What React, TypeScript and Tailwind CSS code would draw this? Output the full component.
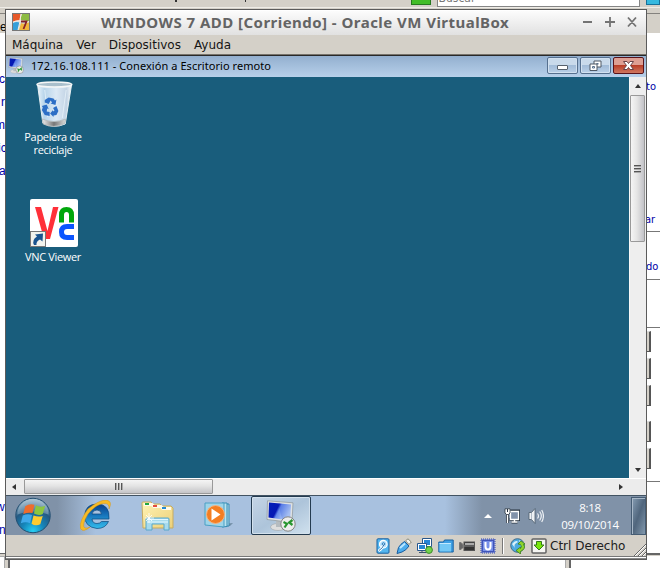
import React from "react";

function Flag({ className }: { className?: string }) {
  return (
    <g className={className}>
      <path d="M10 10.500Q14.500 7.500 19.500 9L17.500 17.500Q13 16.500 8 18.500Z" fill="#ef6c2c" />
      <path d="M21 9.500Q25.500 12 30.500 10L28 18.500Q24 20.500 19 18Z" fill="#8cc63e" />
      <path d="M7.500 20Q12.500 17.500 17 19.500L15 28Q10.500 26 5.500 28Z" fill="#3fa9ea" />
      <path d="M18.500 20Q23.500 22 28 20.500L25.500 29Q20.500 31.500 16.500 28.500Z" fill="#fdcb2f" />
    </g>
  );
}

function RdpIcon({ className }: { className: string }) {
  return (
    <svg viewBox="0 0 30 32" className={className}>
      <defs>
        <linearGradient id="scr" x1="0" x2="1" y2=".4">
          <stop offset="0" stopColor="#0420b8" />
          <stop offset=".45" stopColor="#0518b4" />
          <stop offset=".55" stopColor="#668bec" />
          <stop offset="1" stopColor="#c6ddfa" />
        </linearGradient>
      </defs>
      <ellipse cx="12" cy="27" rx="7.500" ry="3.500" fill="#dedede" stroke="#a0a5a8" strokeWidth=".6" />
      <path d="M10 20l6 1v6h-6z" fill="#b6bcc0" />
      <path d="M1.500.8L27 2.800 26 22.500 1 19.500Z" fill="#dfe2e3" stroke="#8c9599" strokeWidth=".7" />
      <path d="M3 2.500L25 4.500 24 20.500 2.500 17.500Z" fill="url(#scr)" />
      <path d="M12 3.400L16 18.800 24 20.500 25 4.500Z" fill="#2446d2" opacity=".2" />
      <circle cx="22" cy="24" r="7.200" fill="#ececec" stroke="#858585" />
      <path d="M17.500 22l3.500 1.800-2.500 3.700M26.500 20l-3.300 2.500L26.500 25" fill="none" stroke="#28962f" strokeWidth="2.200" />
    </svg>
  );
}

function VistaSevenIcon() {
  return (
    <svg viewBox="0 0 18 18" className="ml-[6px] h-[18px] w-[18px]">
      <rect x=".5" y=".5" width="17" height="17" fill="#d3e2e8" stroke="#777" />
      <path d="M1 1h8Q7 6 8 8 4 7 1 9z" fill="#e7592a" />
      <path d="M10 1h7v7Q13 10 9 8 8 5 10 1z" fill="#8dbb43" />
      <path d="M1 10q4-2 7 0l-2 7H1z" fill="#369fd9" />
      <path d="M9 10q4 2 8-1v8H7z" fill="#f1b53c" />
      <path d="M1 9Q7 6 17 9M9 1Q8 10 6 17" stroke="#f8ece0" fill="none" />
      <path d="M9 8.500h5.500L11.500 16" stroke="#86202a" strokeWidth="1.800" fill="none" />
    </svg>
  );
}

function RecycleBin() {
  return (
    <svg viewBox="0 0 38 46" preserveAspectRatio="none" className="h-[46px] w-[37px]">
      <defs>
        <linearGradient id="glass">
          <stop offset="0" stopColor="#e7f3fb" />
          <stop offset=".2" stopColor="#b7d4ea" />
          <stop offset=".55" stopColor="#dce9f5" />
          <stop offset=".85" stopColor="#c3d4e5" />
          <stop offset="1" stopColor="#f4f8fa" />
        </linearGradient>
        <linearGradient id="base">
          <stop offset="0" stopColor="#eee" /><stop offset=".5" stopColor="#777" /><stop offset="1" stopColor="#ddd" />
        </linearGradient>
      </defs>
      <path d="M1.500 3L7 42Q18 48 30 43L36.500 4Z" fill="url(#glass)" stroke="#e9f0f3" />
      <path d="M6.500 38L7.500 43Q18 48 29.500 42.500L30.500 38Q18 43 6.500 38Z" fill="url(#base)" stroke="#b6bdbf" />
      <ellipse cx="18.900" cy="3.500" rx="17.900" ry="2.600" fill="#a9bfcc" stroke="#f4f6f7" strokeWidth="1.500" />
      <path d="M31 9l-4 28M9 9l3 27" stroke="#edf7fd" opacity=".7" />
      <g fill="#2d6fc6">
        <path d="M9 19l4-2.500 5 1 1.500 2 1.500-1-1 5.500-5-1.500 1.500-1-1.500-2-2 3.500-4-1.500z" />
        <path d="M6 25l5-1.500 2 4.500-1.500-.5-.5 3 3 .5v4l-5-1-3-5 1-2.500z" />
        <path d="M21 25l2 5-2 4-3 .5v1.500l-3.500-3.500 3-3.500v1.500l1.500-1-1.500-2.500z" />
      </g>
    </svg>
  );
}

function VncIcon() {
  return (
    <svg viewBox="0 0 48 48" className="h-[48px] w-[48px]">
      <rect width="48" height="48" rx="2" fill="#fff" />
      <path d="M5 8h6l6.500 24L23 8h5.500L20 40h-6z" fill="#ff3039" />
      <path d="M31.500 23.500V16Q31.500 10.500 36.500 10.500T41.500 16v7.500" fill="none" stroke="#00a70c" strokeWidth="5" />
      <path d="M44 27.500H37Q31.500 27.500 31.500 33T37 38.500H44" fill="none" stroke="#0b55ff" strokeWidth="5" />
      <rect x=".5" y="32.500" width="15" height="15" fill="#f2f3ed" stroke="#777" />
      <path d="M4 46Q1.500 41 7 37.500L5 35.500 13 34.500 12.500 42.500 10 40.500Q6 42 6.500 46Z" fill="#1a548f" />
    </svg>
  );
}

function StartOrb() {
  return (
    <svg viewBox="0 0 38 38" className="ml-[8px] h-[37px] w-[38px] shrink-0">
      <defs>
        <radialGradient id="orb" cy=".95" r=".95">
          <stop offset="0" stopColor="#27cff3" /><stop offset=".33" stopColor="#1586ba" /><stop offset=".65" stopColor="#245a83" /><stop offset="1" stopColor="#a7c0cf" />
        </radialGradient>
      </defs>
      <circle cx="19" cy="19" r="17.700" fill="url(#orb)" stroke="#214d70" />
      <path d="M3 18A16 16 0 0 1 35 18Q18 12 3 18Z" fill="#d6e4ee" opacity=".3" />
      <g transform="translate(1 -1)"><Flag /></g>
    </svg>
  );
}

function IeIcon() {
  return (
    <svg viewBox="0 0 33 32" className="ml-[27px] h-[32px] w-[33px] shrink-0">
      <defs><linearGradient id="ie" x2="0" y2="1"><stop stopColor="#083d88" /><stop offset=".45" stopColor="#1674bb" /><stop offset="1" stopColor="#35bded" /></linearGradient></defs>
      <path d="M30 19H13Q13.500 23.500 18 23.500Q21 23.500 22.500 21.500H29.500Q26.500 28.500 18 28.500Q5.500 27 5.500 15.500Q6.500 4 18 4Q31 4 30 19ZM13 14H22.500Q22 10 18 10Q13.500 10 13 14Z" fill="url(#ie)" stroke="#0b477b" strokeWidth=".7" />
      <path d="M9 9Q20 0 27 0Q34 1 30 9Q30.500 3.500 26 3.500Q18 3 9 14Q2 26 6 28Q8 28.500 11 27Q4 33 1.500 28.500Q0 21 9 9Z" fill="#f7bb25" stroke="#d79516" strokeWidth=".5" />
    </svg>
  );
}

function ExplorerIcon() {
  return (
    <svg viewBox="0 0 33 30" className="ml-[29px] h-[30px] w-[33px] shrink-0">
      <defs><linearGradient id="fold" x2="1" y2="1"><stop stopColor="#fff3b5" /><stop offset="1" stopColor="#ecd078" /></linearGradient></defs>
      <path d="M1 2Q1 1 2 1H10L12 3H19L21 5H30L32 7V27H2Z" fill="url(#fold)" stroke="#c6ab61" />
      <path d="M3 3.500h8l2 2h7l2 2h8" stroke="#fffbea" strokeWidth="3" fill="none" />
      <path d="M4 3h4" stroke="#22a541" strokeWidth="2" />
      <path d="M12 5h4" stroke="#e44d3e" strokeWidth="2" /><path d="M21 7h4" stroke="#258bd3" strokeWidth="2" />
      <path d="M5 18q0-1 1-1h21q1 0 1 1v11h-5v-6H11v6H5z" fill="#a7dbed" stroke="#58a8cb" />
      <path d="M6 18.500h21M6 21h21" stroke="#e2f8ff" />
      <path d="M8 12v10M4 17h9M5 14l6 6M11 14l-6 6" stroke="#fff" strokeWidth=".8" />
    </svg>
  );
}

function PlayerIcon() {
  return (
    <svg viewBox="0 0 30 27" className="ml-[30px] h-[27px] w-[30px] shrink-0">
      <path d="M19 22l10-1-3 3-7 1z" fill="#718da5" /><path d="M18 2h7v22h-7z" fill="#afd9e9" stroke="#348bb3" />
      <path d="M18 1h5v23.500l-5 .5z" fill="#b9e3ef" stroke="#348bb3" />
      <path d="M1 1h19v24L1 23z" fill="#9ed4e8" stroke="#4a9fc4" />
      <circle cx="11.500" cy="12.500" r="9" fill="#f47e22" stroke="#f9b17b" />
      <path d="M7.500 6.500v12l9-6z" fill="#fff" />
    </svg>
  );
}

function CaptionButton({ kind, close = false }: { kind: string; close?: boolean }) {
  return (
    <div className={"flex h-[17px] w-[31px] items-center justify-center rounded-[2px] border " + (close ? "border-[#59131a] bg-linear-to-b from-[#de9f93] from-45% via-[#b93d26] via-50% to-[#cf765f]" : "border-[#56708f] bg-linear-to-b from-[#c9daeb] from-45% via-[#a2bcd8] via-50% to-[#bad0e8] shadow-[inset_0_0_0_1px_#d2e1f0]")}>
      <svg viewBox="0 0 15 13" className="h-[13px] w-[15px]">
        {kind === "min" && <rect x="2.500" y="6.500" width="10" height="4" rx=".5" fill="#fff" stroke="#56606c" />}
        {kind === "restore" && <><path d="M6 2h7v6H6z" fill="#fff" stroke="#4e5865" /><path d="M8.500 4h2v1.500h-2z" fill="#59708d" /><path d="M2 5h7v6.500H2z" fill="#fff" stroke="#4e5865" /><path d="M4.500 7.500h2v1.500h-2z" fill="#fff" stroke="#59708d" /></>}
        {kind === "close" && <path d="M2.500 2.500h3.500L7.500 4.500 9 2.500h3.500L9.500 6.500l3 4H9L7.500 8.500 6 10.500H2.500l3-4z" fill="#fff" stroke="#684247" />}
      </svg>
    </div>
  );
}

function NetworkIcon() {
  return (
    <svg viewBox="0 0 16 16" className="h-[16px] w-[16px]">
      <path d="M6.500 3h8.500v8.500H5.500M10 11v3M7.500 14h6M3.500 5.500V15" fill="none" stroke="#26323f" strokeWidth="3" />
      <path d="M6.500 3.500h8v8h-8z" fill="#8192aa" stroke="#fff" strokeWidth="1.300" />
      <path d="M10.500 11.500V14M7.500 14h6M3.500 6v9" fill="none" stroke="#fff" strokeWidth="1.400" />
      <path d="M1 .8h5V5L4.500 6.500h-2L1 5z" fill="#fff" stroke="#26323f" strokeWidth=".8" /><path d="M3.500 1v3" stroke="#26323f" />
    </svg>
  );
}

function SpeakerIcon() {
  return <svg viewBox="0 0 16 16" className="h-[16px] w-[16px]"><path d="M1 4.500h2.500l3.500-4v15l-3.500-4H1z" fill="#eef1f4" stroke="#4a5a6b" strokeWidth=".8" /><path d="M3.500 5v6" stroke="#8c9aaa" strokeWidth=".6" /><path d="M9.500 5.500q2 2.500 0 5M11.700 3.500q3.200 4.500 0 9M13.700 2q3.500 6 0 12" fill="none" stroke="#edf1f5" strokeWidth="1.200" /></svg>;
}

function StatusIcons() {
  return (
    <div className="flex items-center gap-[5px]">
      <svg viewBox="0 0 16 16" className="h-[16px] w-[16px]"><rect x="2" y=".8" width="12" height="14.400" rx="1" fill="#54b6ef" stroke="#1760a2" /><circle cx="8.300" cy="6.200" r="3.800" fill="#b5e0fb" stroke="#fff" strokeWidth="1.200" /><path d="M8.500 6.500Q8 10 3.500 13" stroke="#fff" strokeWidth="2.500" fill="none" /><path d="M9 6.500Q8 10 4 12.500" stroke="#1668ac" strokeWidth=".9" fill="none" /><circle cx="8.500" cy="6" r="1.300" fill="none" stroke="#1668ac" strokeWidth=".8" /></svg>
      <svg viewBox="0 0 16 16" className="h-[16px] w-[16px]"><path d="M2.500 9.500q2-3.500 6-6l4.500 4.500q-3 4.500-7 6L1 15.500z" fill="#4baced" stroke="#175da0" /><path d="M9.500 2.800L12 .8 15.300 4 13 6.500z" fill="#f5f5ed" stroke="#858779" /><path d="M4 10l5-4.500" stroke="#b9e6ff" strokeWidth="2" /></svg>
      <svg viewBox="0 0 16 16" className="h-[16px] w-[16px]"><path d="M5.500.5h9v8h-9z" fill="#fff" stroke="#27568c" /><path d="M7 2h6v5H7z" fill="#2585d6" /><path d="M.5 5.500h9v7h-9z" fill="#fff" stroke="#27568c" /><path d="M2 7h6v4H2z" fill="#2786d4" /><path d="M2 14.500h7M5 12.500v2" fill="none" stroke="#39516b" /><circle cx="12" cy="12" r="3.400" fill="#73d44d" stroke="#3a8b28" /></svg>
      <svg viewBox="0 0 16 16" className="h-[16px] w-[16px]"><path d="M.8 4h4.700l1-2h8.700v12H.8z" fill="#3d9fe4" stroke="#1762a3" /><path d="M1.500 5H13v8.500H1.500z" fill="#73c8f6" /><path d="M1.500 5.500H13" stroke="#c2e9ff" /></svg>
      <svg viewBox="0 0 16 16" className="h-[16px] w-[16px]"><path d="M.5 4.500h1.500l2 2v3l-2 2H.5z" fill="#666" stroke="#777" /><rect x="5" y="4" width="10.500" height="8.500" fill="#333" stroke="#555" /><path d="M6 5h9v2H6z" fill="#aaa" /><path d="M5 8h10" stroke="#888" /></svg>
      <svg viewBox="0 0 16 16" className="h-[16px] w-[16px]"><rect x="1" y="1" width="14" height="14" fill="#8290d3" stroke="#394cad" strokeDasharray="1 1" /><rect x="2.500" y="2.500" width="11" height="11" fill="#7890e8" stroke="#4054b8" /><path d="M5.500 4v4.500q0 3 2.500 3t2.500-3V4" fill="none" stroke="#fff" strokeWidth="2" /></svg>
    </div>
  );
}

function Grip({ vertical = false }: { vertical?: boolean }) {
  return <div className={"flex gap-px " + (vertical ? "flex-col" : "")}>{[0, 1, 2].map((n) => <i key={n} className={vertical ? "h-[2px] w-[7px] border-b border-[#aaa] bg-[#555]" : "h-[7px] w-[2px] border-r border-[#aaa] bg-[#555]"} />)}</div>;
}

function Browser() {
  return (
    <div className="absolute inset-0 overflow-hidden bg-white font-['Liberation_Sans'] text-[12px] text-[#0000a8]">
      <div className="h-[33px] bg-[#d4d0c8]">
        <div className="flex h-[8px] items-start border-b border-[#eeece7] pl-[411px]">
          <div className="h-[5px] w-[20px] border border-t-0 border-[#26791f] bg-[#42bd28]" />
          <div className="ml-[6px] h-[7px] w-[209px] border border-t-0 border-[#858585] bg-white pl-[1px]"><span className="relative -top-[9px] block font-['DejaVu_Sans_Condensed'] text-[12px] leading-[14px] text-[#777]">Buscar</span></div>
          <div className="ml-[6px] h-[5px] w-[14px] border border-t-0 border-[#17719a] bg-[#36b9df]" />
        </div>
        <div className="mt-[5px] border-t border-[#84827e]" />
      </div>
      <i className="absolute left-[175px] top-0 h-[2px] w-[2px] bg-[#333]" />
      <i className="absolute left-[245px] top-0 h-[2px] w-px bg-[#333]" />
      <span className="absolute left-0 top-[18px] text-black">e</span>
      <span className="absolute -left-[1px] top-[70px]">c</span><span className="absolute left-[1px] top-[93px]">r</span><span className="absolute -left-[5px] top-[116px]">m</span><span className="absolute -left-[2px] top-[139px]">ic</span><span className="absolute -left-[1px] top-[162px]">a</span>
      <span className="absolute -left-[4px] top-[498px]">w</span><span className="absolute -left-[1px] top-[521px]">n</span>
      <div className="absolute left-[646px] top-[79px] h-[480px] w-[14px] font-['DejaVu_Sans_Condensed'] text-[11px]">
        <div className="h-[133px]">to</div><div className="-ml-[1px] h-[19px]">ar</div>
        <div className="h-[48px] border-t border-[#777] pt-[27px]">do</div>
        <div className="h-[48px] border-t border-[#777]" />
        <div className="flex h-[154px] flex-col gap-[6px] border-t border-[#777] pt-[3px]">
          {[0, 1, 2, 3, 4].map((n) => <div key={n} className={"h-[21px] w-[5px] shrink-0 border-b border-r-2 border-t border-[#555] border-t-[#ddd] bg-[#d4d0c8] " + (n === 3 ? "mt-[9px]" : "")} />)}
        </div>
        <div className="border-t border-[#777]" />
      </div>
      <div className="absolute bottom-0 left-0 h-[15px] w-[10px] border-r-2 border-t border-[#666] bg-[#d4d0c8]"><div className="mr-[3px] mt-[2px] h-full border-r border-t border-[#aaa] bg-white" /></div>
      <div className="absolute bottom-0 right-0 h-[15px] w-[91px] border-l-2 border-t-2 border-[#666]"><div className="h-full border-t border-[#d4d0c8]" /></div>
      <div className="absolute bottom-0 right-[91px] h-[10px] w-[4px] border-l border-[#aaa] bg-[#d4d0c8]" />
    </div>
  );
}

export default function App() {
  return (
    <main className="relative h-[568px] w-[660px] overflow-hidden">
      <Browser />
      <section className="absolute left-[5px] top-[9px] flex h-[551px] w-[642px] flex-col border border-[#5b5b5b] bg-[#d4d0c8]">
        <header className="flex h-[25px] shrink-0 items-center border-t border-white bg-linear-to-b from-[#fcfcfc] to-[#e1e1e1] pb-[2px]">
          <VistaSevenIcon />
          <h1 className="ml-[71px] w-[440px] whitespace-nowrap font-['Noto_Sans'] text-[15px] font-bold leading-[22px] tracking-[.46px] text-[#646464]">WINDOWS 7 ADD [Corriendo] - Oracle VM VirtualBox</h1>
          <svg viewBox="0 0 56 12" className="ml-[41px] h-[12px] w-[56px]"><path d="M1 6h9M23 6h10M28 1v10M46 1.500l8 9M54 1.500l-8 9" fill="none" stroke="#737373" strokeWidth="1.800" /></svg>
        </header>
        <nav className="flex h-[19px] shrink-0 items-center gap-[13px] pl-[6px] pt-[2px] font-['DejaVu_Sans'] text-[12px] leading-[17px] text-[#151515]"><span>Máquina</span><span>Ver</span><span>Dispositivos</span><span>Ayuda</span></nav>
        <div className="h-[2px] shrink-0 border-t border-[#77736c] bg-[#292929]" />
        <div className="flex h-[21px] shrink-0 items-center bg-linear-to-b from-[#93afcf] to-[#b7d0ea]">
          <RdpIcon className="mb-[2px] ml-[2px] h-[17px] w-[16px]" />
          <h2 className="mb-[2px] ml-[7px] w-[516px] whitespace-nowrap font-['Noto_Sans'] text-[11px] leading-[18px] tracking-[.06px] text-black">172.16.108.111 - Conexión a Escritorio remoto</h2>
          <div className="mb-[2px] flex gap-[2px]"><CaptionButton kind="min" /><CaptionButton kind="restore" /><CaptionButton kind="close" close /></div>
        </div>
        <div className="flex h-[401px] shrink-0">
          <div className="w-[623px] bg-[#195d7c] font-['Open_Sans'] text-[11px] leading-[13px] tracking-[-.33px] text-white">
            <div className="flex h-[122px] w-[94px] flex-col items-center pt-[4px] text-center"><div className="pl-[2px]"><RecycleBin /></div><span className="mt-[3px] w-[70px]">Papelera de reciclaje</span></div>
            <div className="flex w-[94px] flex-col items-center"><div className="pl-[2px]"><VncIcon /></div><span className="mt-[3px]">VNC Viewer</span></div>
          </div>
          <div className="flex w-[17px] flex-col items-center border-l border-[#f8f8f8] bg-[#eeeeee] pr-px">
            <div className="flex h-[18px] items-center"><i className="border-x-[3px] border-b-[4px] border-x-transparent border-b-[#333]" /></div>
            <div className="flex h-[147px] w-[15px] items-center justify-center rounded-[1px] border border-[#999] bg-linear-to-r from-[#f5f5f5] via-[#e5e5e5] via-45% to-[#c3c3c8] pr-px"><Grip vertical /></div>
            <div className="mb-[6px] mt-auto border-x-[3px] border-t-[4px] border-x-transparent border-t-[#333]" />
          </div>
        </div>
        <div className="flex h-[17px] shrink-0 items-center border-t border-white bg-[#ececec] pb-px">
          <div className="flex w-[18px] justify-center pr-[2px]"><i className="border-y-[3px] border-r-[4px] border-y-transparent border-r-[#333]" /></div>
          <div className="flex h-[15px] w-[189px] items-center justify-center rounded-[1px] border border-[#999] bg-linear-to-b from-[#f5f5f5] via-[#e4e4e4] via-45% to-[#c4c4c7]"><Grip /></div>
          <i className="ml-[406px] border-y-[3px] border-l-[4px] border-y-transparent border-l-[#333]" />
        </div>
        <div className="flex h-[40px] shrink-0 items-center border-t border-[#425362] bg-linear-to-r from-[#8092a8] from-8% via-[#a8c1df] via-14% to-[#a8c1df]">
          <StartOrb /><IeIcon /><ExplorerIcon /><PlayerIcon />
          <div className="ml-[17px] flex h-[39px] w-[60px] shrink-0 items-center justify-center rounded-[2px] border border-[#243b50] bg-linear-to-br from-[#c4d4e5] via-[#adc4da] to-[#d0e1ee] shadow-[inset_0_0_0_1px_#d3e1ed]"><RdpIcon className="h-[32px] w-[30px]" /></div>
          <div className="flex h-full grow items-center bg-linear-to-r from-[#a8c1df] from-[40%] to-[#8092a8] to-[51%] pl-[173px]">
            <i className="border-x-[4px] border-b-[4px] border-x-transparent border-b-white" />
            <div className="ml-[12px] flex gap-[8px]"><NetworkIcon /><SpeakerIcon /></div>
            <div className="ml-[13px] w-[66px] text-center font-['Open_Sans'] text-[11.500px] leading-[17px] tracking-[-.35px] text-white"><div>8:18</div><div>09/10/2014</div></div>
            <div className="ml-auto h-[38px] w-[15px] border border-[#465d74] bg-linear-to-br from-[#879eb4] via-[#50667d] to-[#8399ad] shadow-[inset_1px_1px_#a8b8c8]" />
          </div>
        </div>
        <footer className="relative flex h-[21px] shrink-0 items-center pl-[369px]">
          <StatusIcons />
          <div className="ml-[6px] h-[16px] w-[2px] border-l border-[#777] bg-white" />
          <svg viewBox="0 0 16 16" className="ml-[6px] h-[16px] w-[16px]"><circle cx="7.500" cy="7.500" r="6.800" fill="#4daae0" stroke="#406b8a" /><path d="M2 6q4-5 6-2-5 2-3 6zM9 2l5 3-3 3" fill="#d9f1fa" /><path d="M8 6l3-3 4 3-1.500.5q3 4-3 7V16L6 12.500 10.500 9v1.500q2-2 0-4z" fill="#8ed42a" stroke="#39801b" strokeWidth=".8" /></svg>
          <svg viewBox="0 0 16 16" className="ml-[5px] h-[16px] w-[16px]"><rect x="1" y="1" width="14" height="14" rx="1" fill="#f6f6f2" stroke="#636363" strokeWidth="1.500" /><path d="M5.500 3.500h5V7H13l-5 5-5-5h2.500z" fill="#79e70b" stroke="#35791a" /></svg>
          <span className="ml-[3px] whitespace-nowrap font-['DejaVu_Sans'] text-[12px] text-[#202020]">Ctrl Derecho</span>
          <svg viewBox="0 0 12 12" className="absolute bottom-0 right-0 h-[12px] w-[12px]"><path d="M0 12L12 0M4 12l8-8M8 12l4-4" stroke="#666" /><path d="M1 12L12 1M5 12l7-7M9 12l3-3" stroke="#fff" /></svg>
        </footer>
        <div className="grow border-t border-[#777] bg-white"><div className="mt-px border-t border-[#888]" /></div>
      </section>
    </main>
  );
}
